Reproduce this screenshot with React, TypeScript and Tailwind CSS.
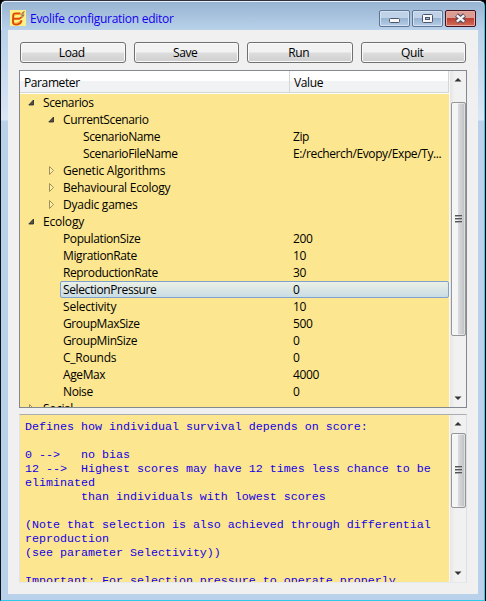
import type { ReactNode } from "react";

type Row = {
  label: string;
  value?: string;
  indent: string;
  state?: "open" | "closed";
  selected?: boolean;
  spacing?: string;
};

const rows: Row[] = [
  { label: "Scenarios", indent: "pl-[6px]", state: "open" },
  { label: "CurrentScenario", indent: "pl-[26px]", state: "open" },
  { label: "ScenarioName", value: "Zip", indent: "pl-[46px]" },
  { label: "ScenarioFileName", value: "E:/recherch/Evopy/Expe/Ty...", indent: "pl-[46px]" },
  { label: "Genetic Algorithms", indent: "pl-[26px]", state: "closed", spacing: "tracking-[-0.24px]" },
  { label: "Behavioural Ecology", indent: "pl-[26px]", state: "closed", spacing: "tracking-[-0.26px]" },
  { label: "Dyadic games", indent: "pl-[26px]", state: "closed", spacing: "tracking-[-0.25px]" },
  { label: "Ecology", indent: "pl-[6px]", state: "open", spacing: "tracking-[-0.2px]" },
  { label: "PopulationSize", value: "200", indent: "pl-[26px]" },
  { label: "MigrationRate", value: "10", indent: "pl-[26px]" },
  { label: "ReproductionRate", value: "30", indent: "pl-[26px]" },
  { label: "SelectionPressure", value: "0", indent: "pl-[26px]", selected: true },
  { label: "Selectivity", value: "10", indent: "pl-[26px]", spacing: "tracking-[-0.2px]" },
  { label: "GroupMaxSize", value: "500", indent: "pl-[26px]" },
  { label: "GroupMinSize", value: "0", indent: "pl-[26px]" },
  { label: "C_Rounds", value: "0", indent: "pl-[26px]", spacing: "tracking-[-0.25px]" },
  { label: "AgeMax", value: "4000", indent: "pl-[26px]" },
  { label: "Noise", value: "0", indent: "pl-[26px]" },
  { label: "Social", indent: "pl-[6px]", state: "closed" },
];

const help = `Defines how individual survival depends on score:

0 -->   no bias
12 -->  Highest scores may have 12 times less chance to be
eliminated
        than individuals with lowest scores

(Note that selection is also achieved through differential
reproduction
(see parameter Selectivity))

Important: For selection pressure to operate properly`;

function Logo() {
  return (
    <svg className="h-4 w-4" viewBox="0 0 16 16">
      <rect width="16" height="16" fill="#fff08a" />
      <path d="M10.500 3.600H5.500C4 3.600 3.200 4.600 3.200 6L3 12c0 1.800 1.200 2.400 3 2.400 2.800 0 5-1.600 5.600-4.200" fill="none" stroke="#dc4c08" strokeWidth="2" />
      <path d="M3.500 8.800h5.500l3-1.800" fill="none" stroke="#dc4c08" strokeWidth="2" />
      <path d="M4 5.200c2-.9 4-.8 6-.6M4.300 13c2.200.5 4-.2 5.500-1.600" fill="none" stroke="#ffa020" strokeWidth="1" />
      <path d="M10.500 4.500l2-2.500L15 .8l-1 2.500.6 2-1.300 1-.3 1.500-1.700-.3z" fill="#c79c60" />
      <path d="M12.200 3.500L14 1.500M12 5.500l2 .5" stroke="#755333" strokeWidth="0.700" />
    </svg>
  );
}

function Caption({ close, children }: { close?: boolean; children: ReactNode }) {
  return (
    <div
      className={
        close
          ? "h-[17px] w-[31px] rounded-[2px] border border-[#42101c] bg-linear-to-b from-[#dc9c91] from-45% via-[#bd4033] via-50% to-[#d36c57] shadow-[inset_0_0_0_1px_#e6aaa0]"
          : "h-[17px] w-[31px] rounded-[2px] border border-[#5e7593] bg-linear-to-b from-[#bfd2e7] from-45% via-[#98b4d2] via-50% to-[#b5cde8] shadow-[inset_0_0_0_1px_#d3e2f2]"
      }
    >
      <svg className="h-[15px] w-[29px]" viewBox="0 0 29 15">{children}</svg>
    </div>
  );
}

function Expander({ state }: { state?: "open" | "closed" }) {
  return (
    <svg className="h-[17px] w-[17px] shrink-0" viewBox="0 0 17 17">
      {state === "open" && <path d="M7.500 6V11H2.800z" fill="#505050" stroke="#222" strokeWidth="0.800" />}
      {state === "closed" && <path d="M3.500 4.500v8l4-4z" fill="#fff0b0" stroke="#a09058" strokeWidth="1" />}
    </svg>
  );
}

function ScrollBar({ before, thumb }: { before: string; thumb: string }) {
  return (
    <div className="flex w-[17px] shrink-0 flex-col items-center border-l border-[#f8f8f8] bg-linear-to-r from-[#e6e6e6] to-[#f1f1f1] to-30%">
      <div className={`${before} w-full shrink-0`}>
        <svg className="h-[17px] w-4" viewBox="0 0 16 17"><path d="M4.500 10.500L8 7l3.500 3.500z" fill="#333" /></svg>
      </div>
      <div className={`${thumb} flex w-[15px] shrink-0 items-center justify-center rounded-[2px] border border-[#969696] bg-linear-to-r from-[#f5f5f5] from-45% via-[#d9dade] via-50% to-[#bfc0c4] shadow-[inset_0_0_0_1px_#fafafa80]`}>
        <svg className="h-[9px] w-[7px]" viewBox="0 0 7 9" shapeRendering="crispEdges">
          <path d="M0 .5h7M0 3.500h7M0 6.500h7" stroke="#555" />
          <path d="M0 1.500h7M0 4.500h7M0 7.500h7" stroke="#aaa" />
        </svg>
      </div>
      <div className="flex w-full flex-1 items-end">
        <svg className="h-[17px] w-4" viewBox="0 0 16 17"><path d="M4.500 6.500L8 10l3.500-3.500z" fill="#333" /></svg>
      </div>
    </div>
  );
}

export default function App() {
  return (
    <div className="h-[601px] w-[486px] overflow-hidden bg-black font-['Open_Sans','Noto_Sans',sans-serif] text-[12px] tracking-[-0.39px] text-black">
      <div className="flex h-[601px] w-[485px] flex-col rounded-t-[6px] border border-t-[#30303c] border-r-[#2ccbea] border-b-[#2ccbea] border-l-[#101018] bg-linear-to-b from-[#b9d1ea] from-[30px] via-[#d9e6f5] via-[119px] to-[#b9d1ea] to-[120px]">
        <header className="flex h-[29px] shrink-0 rounded-t-[5px] border-t border-l border-[#e5f0fa] bg-linear-to-b from-[#98b4d2] to-[#b9d1ea] pl-2">
          <div className="pt-[8px]"><Logo /></div>
          <div className="ml-1 pt-[8px] leading-[17px] tracking-[-0.27px] whitespace-pre text-[#1400f0]">Evolife configuration editor</div>
          <div className="ml-auto flex gap-[2px] pt-[8px] pr-[8px]">
            <Caption><rect x="9.500" y="7.500" width="10" height="4" rx="1" fill="#f8f8f8" stroke="#4c5568" /></Caption>
            <Caption>
              <rect x="9.500" y="3.500" width="10" height="8" rx="1" fill="#f8f8f8" stroke="#4c5568" />
              <rect x="12.500" y="6.500" width="4" height="2" fill="#98b4d2" stroke="#4c5568" />
            </Caption>
            <Caption close>
              <path d="M10.500 4l8 7m0-7l-8 7" stroke="#514b60" strokeWidth="4.400" />
              <path d="M10.800 4.300l7.400 6.400m0-6.400l-7.400 6.400" stroke="#f5f5f5" strokeWidth="2.400" />
            </Caption>
          </div>
        </header>
        <main className="mx-[7px] mr-[6px] flex h-[564px] shrink-0 flex-col bg-[#f0f0f0] px-[11px] pt-[12px]">
          <div className="mx-px flex h-[21px] shrink-0 gap-[8px]">
            {["Load", "Save", "Run", "Quit"].map((name) => (
              <button key={name} className="flex-1 rounded-[3px] border border-[#707070] bg-linear-to-b from-[#f2f2f2] from-48% via-[#dddddd] via-52% to-[#cfcfcf] pr-[2px] leading-[20px] shadow-[inset_0_0_0_1px_#fafafa]">{name}</button>
            ))}
          </div>
          <section className="mt-[7px] flex h-[338px] shrink-0 border border-[#828790] bg-[#fce68f]">
            <div className="flex min-w-0 flex-1 flex-col overflow-hidden">
              <div className="flex h-[23px] shrink-0 border-b border-white bg-white">
                <div className="w-[270px] border-r border-b border-[#d5d5d5] bg-linear-to-b from-white from-45% to-[#f1f2f4] to-50% pl-[4px] leading-[23px]">Parameter</div>
                <div className="flex-1 border-r border-b border-[#d5d5d5] bg-linear-to-b from-white from-45% to-[#f1f2f4] to-50% pl-[4px] leading-[23px]">Value</div>
              </div>
              {rows.map((row) => (
                <div key={row.label} className={`${row.indent} flex h-[17px] shrink-0 leading-[17px]`}>
                  {row.selected ? (
                    <div className="ml-[14px] flex flex-1 rounded-[2px] border border-[#7da2ce] bg-linear-to-b from-[#ebf0e5] to-[#c9dce5] leading-[15px]">
                      <span className="flex-1 pl-[2px]">{row.label}</span>
                      <span className="w-[155px]">{row.value}</span>
                    </div>
                  ) : (
                    <>
                      <Expander state={row.state} />
                      <span className={`${row.spacing ?? ""} flex-1`}>{row.label}</span>
                      <span className="w-[156px] whitespace-nowrap">{row.value}</span>
                    </>
                  )}
                </div>
              ))}
            </div>
            <ScrollBar before="h-[31px]" thumb="h-[234px]" />
          </section>
          <section className="mt-[6px] flex h-[169px] shrink-0 overflow-hidden border border-t-[#abadb3] border-r-[#dbdfe6] border-b-[#e3e9ef] border-l-[#e2e3ea] bg-[#fce68f]">
            <pre className="flex-1 overflow-hidden pt-[5px] pl-[5px] font-['Liberation_Mono',monospace] text-[11.665px] leading-[14px] tracking-normal text-[#1400e6]">{help}</pre>
            <ScrollBar before="h-[18px]" thumb="h-[75px]" />
          </section>
        </main>
      </div>
    </div>
  );
}
